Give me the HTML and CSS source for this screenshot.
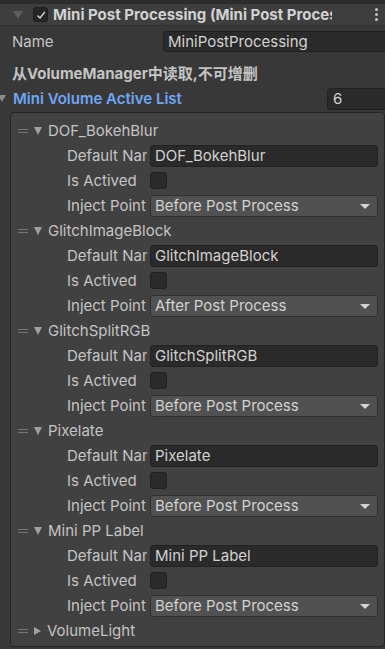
FILE: index.html
```html
<!DOCTYPE html>
<html lang="zh">
<head>
<meta charset="UTF-8"/>
<meta name="viewport" content="width=device-width, initial-scale=1.0"/>
<title>Mini Post Processing - Inspector</title>
<link rel="stylesheet" href="styles.css">
</head>
<body>
<div class="inspector">
  <!-- Component header -->
  <div class="comp-header">
    <span class="fold down"></span>
    <span class="toggle checked">
      <svg viewBox="0 0 10 10" width="10" height="10"><path d="M1.5 5.5 L4 8 L8.8 2" fill="none" stroke="#d8d8d8" stroke-width="1.3"/></svg>
    </span>
    <span class="comp-title">Mini Post Processing (Mini Post Processing)</span>
    <span class="kebab"><i></i><i></i><i></i></span>
  </div>

  <!-- Name -->
  <div class="row name-row">
    <label class="label-wide">Name</label>
    <div class="field text-field">MiniPostProcessing</div>
  </div>

  <div class="note">从VolumeManager中读取,不可增删</div>

  <!-- List header -->
  <div class="row list-head">
    <span class="fold down small-fold"></span>
    <span class="list-title">Mini Volume Active List</span>
    <div class="field int-field">6</div>
  </div>

  <!-- List box -->
  <div class="list-box">
    <div class="element">
      <div class="el-head"><span class="handle"></span><span class="fold down"></span><span class="el-name">DOF_BokehBlur</span></div>
      <div class="prop"><label>Default Name</label><div class="field text-field">DOF_BokehBlur</div></div>
      <div class="prop"><label>Is Actived</label><span class="checkbox"></span></div>
      <div class="prop"><label>Inject Point</label><div class="field dropdown">Before Post Process<span class="caret"></span></div></div>
    </div>
    <div class="element">
      <div class="el-head"><span class="handle"></span><span class="fold down"></span><span class="el-name">GlitchImageBlock</span></div>
      <div class="prop"><label>Default Name</label><div class="field text-field">GlitchImageBlock</div></div>
      <div class="prop"><label>Is Actived</label><span class="checkbox"></span></div>
      <div class="prop"><label>Inject Point</label><div class="field dropdown">After Post Process<span class="caret"></span></div></div>
    </div>
    <div class="element">
      <div class="el-head"><span class="handle"></span><span class="fold down"></span><span class="el-name">GlitchSplitRGB</span></div>
      <div class="prop"><label>Default Name</label><div class="field text-field">GlitchSplitRGB</div></div>
      <div class="prop"><label>Is Actived</label><span class="checkbox"></span></div>
      <div class="prop"><label>Inject Point</label><div class="field dropdown">Before Post Process<span class="caret"></span></div></div>
    </div>
    <div class="element">
      <div class="el-head"><span class="handle"></span><span class="fold down"></span><span class="el-name">Pixelate</span></div>
      <div class="prop"><label>Default Name</label><div class="field text-field">Pixelate</div></div>
      <div class="prop"><label>Is Actived</label><span class="checkbox"></span></div>
      <div class="prop"><label>Inject Point</label><div class="field dropdown">Before Post Process<span class="caret"></span></div></div>
    </div>
    <div class="element">
      <div class="el-head"><span class="handle"></span><span class="fold down"></span><span class="el-name">Mini PP Label</span></div>
      <div class="prop"><label>Default Name</label><div class="field text-field">Mini PP Label</div></div>
      <div class="prop"><label>Is Actived</label><span class="checkbox"></span></div>
      <div class="prop"><label>Inject Point</label><div class="field dropdown">Before Post Process<span class="caret"></span></div></div>
    </div>
    <div class="element">
      <div class="el-head"><span class="handle"></span><span class="fold right"></span><span class="el-name">VolumeLight</span></div>
    </div>
  </div>
</div>
</body>
</html>
```

FILE: styles.css
```css
/* Unity dark inspector look */
html, body {
  margin:0; padding:0;
  width:100%; height:100%;
  background:#383838;
  overflow:hidden;
  font-family:Inter, "Noto Sans CJK SC", sans-serif;
  font-size:15px;
  color:#c4c4c4;
}

.inspector {
  width:100%;
  border-top:4px solid #2c2c2c;
}

/* Component header bar */
.comp-header {
  height:21px;
  background:#3e3e3e;
  display:flex;
  align-items:center;
  border-bottom:1px solid #323232;
}
.comp-title {
  margin-left:5px;
  font-weight:bold;
  color:#d2d2d2;
  white-space:nowrap;
  overflow:hidden;
  width:279px;
}
.kebab {
  margin-left:auto;
  margin-right:7px;
  display:flex;
  flex-direction:column;
  gap:2px;
}
.kebab i {
  width:3px; height:3px;
  background:#c4c4c4;
  border-radius:50%;
}

/* fold triangles */
.fold {
  width:0; height:0;
  flex-shrink:0;
}
.fold.down {
  border-left:4px solid transparent;
  border-right:4px solid transparent;
  border-top:7px solid #a0a0a0;
}
.comp-header .fold.down {
  margin-left:13px;
  border-left-width:5px;
  border-right-width:5px;
  border-top:8px solid #5e5e5e;
}
.fold.right {
  border-top:4px solid transparent;
  border-bottom:4px solid transparent;
  border-left:7px solid #a0a0a0;
}

.toggle {
  width:13px; height:13px;
  margin-left:10px;
  background:#262626;
  border:1px solid #1e1e1e;
  border-radius:3px;
  display:flex;
  align-items:center;
  justify-content:center;
}

/* Generic rows */
.row {
  display:flex;
  align-items:center;
}
.name-row {
  height:24px;
  margin-top:3px;
}
.label-wide {
  width:151px;
  padding-left:12px;
  flex-shrink:0;
}

.field {
  box-sizing:border-box;
  height:22px;
  border-radius:3px;
  color:#d2d2d2;
  padding-left:4px;
  display:flex;
  align-items:center;
  white-space:nowrap;
  overflow:hidden;
}
.text-field {
  background:#2a2a2a;
  border:1px solid #212121;
  flex:1;
}
.name-row .text-field {
  margin-right:-6px;
  height:21px;
}

.note {
  margin-top:9px;
  height:24px;
  line-height:24px;
  padding-left:12px;
  font-weight:bold;
  color:#c4c4c4;
}

.list-head {
  height:25px;
}
.small-fold.down {
  margin-left:-2px;
  border-top-color:#8a8a8a;
}
.list-title {
  margin-left:7px;
  color:#6ea6f5;
  font-weight:600;
}
.int-field {
  margin-left:auto;
  width:64px;
  margin-right:-6px;
  background:#2a2a2a;
  border:1px solid #212121;
  padding-left:5px;
}

/* Reorderable list */
.list-box {
  margin:1px 0 0 10px;
  padding:5px 0 3px;
  background:#414141;
  border:1px solid #252525;
  border-radius:4px;
}
.el-head {
  height:25px;
  display:flex;
  align-items:center;
  padding-left:7px;
}
.handle {
  width:10px; height:4px;
  border-top:1px solid #777;
  border-bottom:1px solid #777;
  box-sizing:border-box;
  margin-right:6px;
}
.el-head .fold.down {
  border-left-width:4px;
  border-right-width:4px;
  border-top-width:8px;
}
.el-name {
  margin-left:6px;
  color:#c4c4c4;
}

.prop {
  height:25px;
  display:flex;
  align-items:center;
  padding-left:56px;
  padding-right:6px;
}
.prop label {
  width:80px;
  margin-right:3px;
  flex-shrink:0;
  white-space:nowrap;
  overflow:hidden;
}
.prop .text-field {
  flex:1;
}

.checkbox {
  width:17px; height:17px;
  box-sizing:border-box;
  background:#2a2a2a;
  border:1px solid #212121;
  border-radius:3px;
}

.dropdown {
  flex:1;
  background:#515151;
  border:1px solid #303030;
  position:relative;
}
.caret {
  position:absolute;
  right:7px; top:8px;
  width:0; height:0;
  border-left:5px solid transparent;
  border-right:5px solid transparent;
  border-top:5px solid #d2d2d2;
}
```
